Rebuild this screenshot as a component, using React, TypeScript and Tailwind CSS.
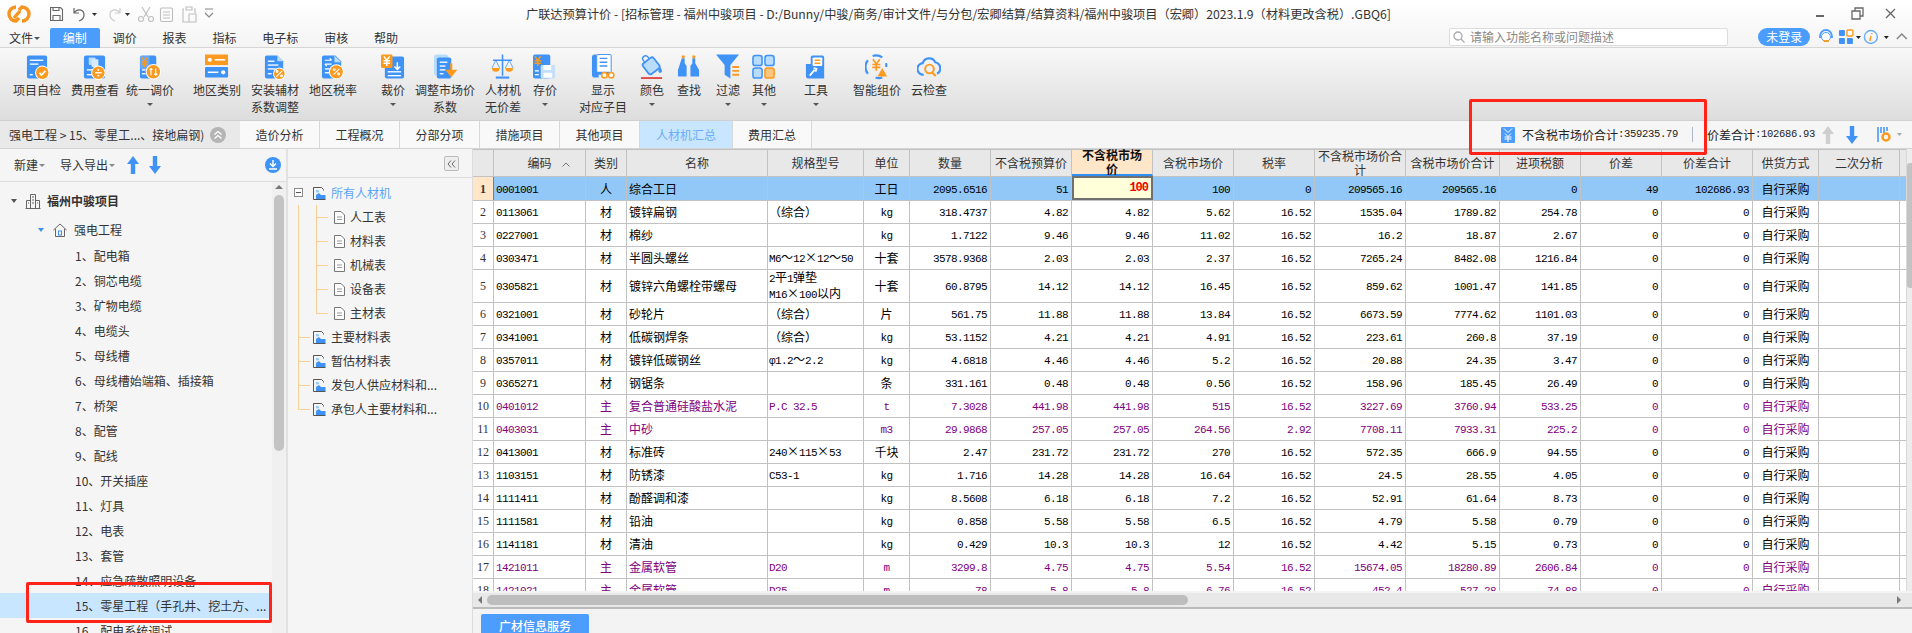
import React from "react";

const B = "#3f93f6";
const O = "#fb9a1e";
const L = "#b9dcfb";

function Yen({ x, y, s = 1, c = "#fff" }: { x: number; y: number; s?: number; c?: string }) {
  return (
    <g transform={`translate(${x} ${y}) scale(${s})`} stroke={c} strokeWidth="1.5" fill="none">
      <path d="M1 0l3 4 3-4M.5 4.5h7M.5 7h7M4 4v6" />
    </g>
  );
}
function Badge({ x, y, r, children }: { x: number; y: number; r: number; children?: React.ReactNode }) {
  return (
    <g>
      <circle cx={x} cy={y} r={r + 1} fill="#fff" />
      <circle cx={x} cy={y} r={r} fill={O} />
      {children}
    </g>
  );
}
function Lines({ x, ys, w }: { x: number; ys: number[]; w: number[] }) {
  return (
    <g stroke="#fff" strokeWidth="1.4">
      {ys.map((y, i) => (
        <path key={i} d={`M${x} ${y}h${w[i]}`} />
      ))}
    </g>
  );
}
const Pct = ({ x, y }: { x: number; y: number }) => (
  <g stroke="#fff" strokeWidth="1.2" fill="none">
    <path d={`M${x + 3} ${y - 3}l-6 6`} />
    <circle cx={x - 2.3} cy={y - 2.3} r=".9" />
    <circle cx={x + 2.3} cy={y + 2.3} r=".9" />
  </g>
);

const icons: Record<string, React.ReactNode> = {
  a: (
    <>
      <rect x="2" y="1" width="21" height="24" rx="2" fill={B} />
      <Lines x={5} ys={[6, 10, 21]} w={[14, 9, 3]} />
      <Badge x={18} y={19} r={6.5}>
        <path d="M15 19l2.2 2.4 4-4.4" stroke="#fff" strokeWidth="1.7" fill="none" />
      </Badge>
    </>
  ),
  b: (
    <>
      <rect x="1" y="1" width="22" height="24" rx="2" fill={B} />
      <rect x="6" y="3" width="7" height="8" rx="1" fill={L} />
      <rect x="9" y="5" width="7" height="8" rx="1" fill="#d7ebfd" />
      <Lines x={4} ys={[16, 21]} w={[6, 6]} />
      <Badge x={16} y={19} r={6.5}>
        <path d="M12.5 19h7" stroke="#fff" strokeWidth="1.4" />
        <circle cx="16" cy="16" r="1" fill="#fff" />
        <circle cx="16" cy="22" r="1" fill="#fff" />
      </Badge>
    </>
  ),
  c: (
    <>
      <rect x="2" y="1" width="17" height="24" rx="2" fill={B} />
      <rect x="2" y="1" width="10" height="14" rx="1" fill="#fff" opacity=".2" />
      <Yen x={3} y={3} c={O} />
      <Lines x={4} ys={[16, 20]} w={[4, 4]} />
      <Badge x={16} y={18} r={7}>
        <path d="M13.5 14.5v7M12 16l1.5-1.5L15 16M18.5 21.5v-7M17 20l1.5 1.500L20 20" stroke="#fff" strokeWidth="1.2" fill="none" />
      </Badge>
    </>
  ),
  d: (
    <>
      <rect x="0" y="0" width="24" height="11" fill={O} />
      <rect x="0" y="13" width="24" height="11" rx="1" fill={B} />
      <circle cx="5" cy="5.5" r="2.2" fill="#fff" />
      <path d="M10 5.5h11" stroke="#fff" strokeWidth="1.6" />
      <path d="M3 18.5h11" stroke="#fff" strokeWidth="1.6" />
      <circle cx="19" cy="18.5" r="2.2" fill="#fff" />
    </>
  ),
  e: (
    <>
      <path d="M2 3a2 2 0 012-2h11l6 6v16a2 2 0 01-2 2H4a2 2 0 01-2-2z" fill={B} />
      <path d="M15 1l6 6h-6z" fill={L} />
      <Lines x={5} ys={[7, 11, 15, 20]} w={[7, 11, 8, 4]} />
      <Badge x={17} y={20} r={5.5}><Pct x={17} y={20} /></Badge>
    </>
  ),
  f: (
    <>
      <path d="M1 3a2 2 0 012-2h12l6 6v16a2 2 0 01-2 2H3a2 2 0 01-2-2z" fill={B} />
      <path d="M14 1l7 7h-7z" fill={L} />
      <path d="M4 6h7M9 4l2 2M11 10H4M6 12l-2-2" stroke="#fff" strokeWidth="1.2" fill="none" />
      <Lines x={4} ys={[15, 19]} w={[5, 5]} />
      <Badge x={16} y={18} r={6.8}><Pct x={16} y={18} /></Badge>
    </>
  ),
  g: (
    <>
      <rect x="4" y="2" width="20" height="23" rx="2" fill={B} />
      <rect x="0" y="0" width="12" height="14" rx="1.5" fill={O} />
      <Yen x={2} y={2} />
      <path d="M17 8v7M14 12.5l3 3 3-3" stroke="#fff" strokeWidth="1.6" fill="none" />
      <Lines x={7} ys={[18, 22]} w={[14, 14]} />
    </>
  ),
  h: (
    <>
      <rect x="1" y="0" width="15" height="22" rx="3" fill={L} />
      <rect x="4" y="3" width="15" height="22" rx="2" fill={B} />
      <Lines x={7} ys={[8, 12, 16, 20]} w={[8, 6, 6, 4]} />
      <path d="M19 9v12M15 17l4 5 4-5z" stroke={O} strokeWidth="2.2" fill={O} />
    </>
  ),
  i: (
    <>
      <path d="M12 0v22M2 6h20" stroke={B} strokeWidth="1.6" />
      <path d="M5 24h14" stroke={B} strokeWidth="2.2" />
      <path d="M1 14h8a4 4 0 01-8 0zM15 14h8a4 4 0 01-8 0z" fill={O} />
      <path d="M5 6l-4 8M5 6l4 8M19 6l-4 8M19 6l4 8" stroke={B} strokeWidth=".8" />
    </>
  ),
  j: (
    <>
      <rect x="0" y="0" width="18" height="25" rx="2" fill={B} />
      <Yen x={1} y={2} c={O} />
      <rect x="8" y="11" width="15" height="14" rx="1.5" fill="#c3dffa" />
      <rect x="11" y="11" width="8" height="5" fill="#fff" />
      <rect x="11" y="19" width="9" height="5" fill="#fff" />
      <Lines x={2} ys={[17, 21]} w={[4, 4]} />
    </>
  ),
  k: (
    <>
      <path d="M1 3a3 3 0 013-3h2v20H1z" fill={B} />
      <rect x="6" y="0" width="15" height="19" rx="1" fill="#fff" stroke={B} strokeWidth="1" />
      <path d="M1 21a3 3 0 013-3h16v3H8v3H4a3 3 0 01-3-3z" fill={B} />
      <g stroke={B}><path d="M9 4h8M9 8h8M9 12h8" strokeWidth="1.5" /></g>
      <circle cx="14" cy="21.5" r="2.8" fill="#fff" stroke={O} strokeWidth="1.6" />
      <circle cx="21" cy="21.5" r="2.8" fill="#fff" stroke={O} strokeWidth="1.6" />
    </>
  ),
  l: (
    <>
      <g transform="rotate(-38 11 11)">
        <rect x="4" y="5" width="14" height="14" rx="2.5" fill={L} stroke={B} strokeWidth="1.8" />
        <path d="M8 5V2.500a3 3 0 016 0V5" stroke={B} strokeWidth="1.4" />
      </g>
      <path d="M21 13c2.500 3.500 2.500 6 0 6s-2.500-2.500 0-6z" fill={B} />
      <path d="M1 24.500h22" stroke="#e04b4b" strokeWidth="2" />
    </>
  ),
  m: (
    <>
      <path d="M5 4h3v5l2 3v11H1v-7zM16 4h3v5l4 7v7h-9V12l2-3z" fill={B} />
      <path d="M5 1h3v3H5zM16 1h3v3h-3z" fill={O} />
    </>
  ),
  n: (
    <>
      <path d="M0 0h24l-9 11v14l-6-4V11z" fill={B} />
      <path d="M17 12h7v2h-7zM17 16h7v2h-7zM17 20h7v2h-7z" fill={O} />
    </>
  ),
  o: (
    <>
      <rect x="1" y="1" width="9.5" height="10.5" rx="2.5" fill={L} stroke={B} strokeWidth="1.6" />
      <rect x="13.5" y="1" width="9.5" height="10.5" rx="2.5" fill={L} stroke={B} strokeWidth="1.6" />
      <rect x="1" y="14" width="9.5" height="10.5" rx="2.5" fill={L} stroke={B} strokeWidth="1.6" />
      <rect x="13.5" y="14" width="9.5" height="10.5" rx="2.5" fill="#fcc67f" stroke={O} strokeWidth="1.6" />
    </>
  ),
  p: (
    <>
      <path d="M7 10V3a2 2 0 012-2h10a2 2 0 012 2v22H5a3 3 0 01-3-3V10z" fill={B} />
      <rect x="9" y="3" width="10" height="9" rx="1" fill="#fff" />
      <path d="M11 6h6M11 9h6" stroke={O} strokeWidth="1.6" />
      <path d="M6 22l5-6M10 14l3 1-1 3" stroke="#fff" strokeWidth="1.8" fill="none" />
    </>
  ),
  q: (
    <>
      <path d="M3 20A11 11 0 013 6M8 1.500A11 11 0 0118 3M22 9a11 11 0 010 4M18 24a11 11 0 01-7 0" stroke={B} strokeWidth="2.2" fill="none" />
      <Yen x={7} y={5} s={1.2} c={O} />
      <path d="M18 14l5 9H13z" fill={O} />
    </>
  ),
  r: (
    <>
      <path d="M7 21a6 6 0 01-1-12 7 7 0 0113-1 6.500 6.500 0 012 12" stroke={B} strokeWidth="2.2" fill="none" />
      <circle cx="13" cy="15" r="4.500" stroke={O} strokeWidth="2" fill="none" />
      <path d="M16 19l3.500 3.500" stroke={O} strokeWidth="2.2" />
    </>
  ),
};

type T = { k: string; l: string; ml: string; w: string; arrow?: boolean };
const tools: T[] = [
  { k: "a", l: "项目自检", ml: "ml-[13px]", w: "w-[48px]" },
  { k: "b", l: "费用查看", ml: "ml-[10px]", w: "w-[48px]" },
  { k: "c", l: "统一调价", ml: "ml-[7px]", w: "w-[48px]", arrow: true },
  { k: "d", l: "地区类别", ml: "ml-[19px]", w: "w-[48px]" },
  { k: "e", l: "安装辅材\n系数调整", ml: "ml-[10px]", w: "w-[48px]" },
  { k: "f", l: "地区税率", ml: "ml-[10px]", w: "w-[48px]" },
  { k: "g", l: "裁价", ml: "ml-[24px]", w: "w-[24px]", arrow: true },
  { k: "h", l: "调整市场价\n系数", ml: "ml-[10px]", w: "w-[60px]" },
  { k: "i", l: "人材机\n无价差", ml: "ml-[10px]", w: "w-[36px]" },
  { k: "j", l: "存价", ml: "ml-[12px]", w: "w-[24px]", arrow: true },
  { k: "k", l: "显示\n对应子目", ml: "ml-[22px]", w: "w-[48px]" },
  { k: "l", l: "颜色", ml: "ml-[13px]", w: "w-[24px]", arrow: true },
  { k: "m", l: "查找", ml: "ml-[13px]", w: "w-[24px]" },
  { k: "n", l: "过滤", ml: "ml-[15px]", w: "w-[24px]", arrow: true },
  { k: "o", l: "其他", ml: "ml-[12px]", w: "w-[24px]", arrow: true },
  { k: "p", l: "工具", ml: "ml-[28px]", w: "w-[24px]", arrow: true },
  { k: "q", l: "智能组价", ml: "ml-[25px]", w: "w-[48px]" },
  { k: "r", l: "云检查", ml: "ml-[10px]", w: "w-[36px]" },
];

const Caret = ({ c = "border-t-[#555]", cls = "" }: { c?: string; cls?: string }) => (
  <span className={`inline-block w-0 h-0 border-x-[3px] border-x-transparent border-t-[3px] ${c} ${cls}`} />
);

const Arrow = ({ up, color, cls = "" }: { up?: boolean; color: string; cls?: string }) => (
  <svg width="12" height="18" viewBox="0 0 12 18" className={cls}>
    <path d={up ? "M6 0l6 8H8.200v10H3.800V8H0z" : "M6 18l6-8H8.200V0H3.800v10H0z"} fill={color} />
  </svg>
);

const cols = [
  "w-[21px]", "w-[92px]", "w-[41px]", "w-[141px]", "w-[96px]", "w-[46px]", "w-[81px]", "w-[81px]", "w-[81px]",
  "w-[81px]", "w-[81px]", "w-[91px]", "w-[94px]", "w-[81px]", "w-[81px]", "w-[91px]", "w-[66px]", "w-[81px]",
];
const heads = [
  "", "编码", "类别", "名称", "规格型号", "单位", "数量", "不含税预算价", "不含税市场\n价", "含税市场价", "税率",
  "不含税市场价合\n计", "含税市场价合计", "进项税额", "价差", "价差合计", "供货方式", "二次分析",
];
const S = "自行采购";
const rows: string[][] = [
  ["0001001","人","综合工日","","工日","2095.6516","51","100","100","0","209565.16","209565.16","0","49","102686.93",S,""],
  ["0113061","材","镀锌扁钢","（综合）","kg","318.4737","4.82","4.82","5.62","16.52","1535.04","1789.82","254.78","0","0",S,""],
  ["0227001","材","棉纱","","kg","1.7122","9.46","9.46","11.02","16.52","16.2","18.87","2.67","0","0",S,""],
  ["0303471","材","半圆头螺丝","M6～12×12～50","十套","3578.9368","2.03","2.03","2.37","16.52","7265.24","8482.08","1216.84","0","0",S,""],
  ["0305821","材","镀锌六角螺栓带螺母","2平1弹垫\nM16×100以内","十套","60.8795","14.12","14.12","16.45","16.52","859.62","1001.47","141.85","0","0",S,""],
  ["0321001","材","砂轮片","（综合）","片","561.75","11.88","11.88","13.84","16.52","6673.59","7774.62","1101.03","0","0",S,""],
  ["0341001","材","低碳钢焊条","（综合）","kg","53.1152","4.21","4.21","4.91","16.52","223.61","260.8","37.19","0","0",S,""],
  ["0357011","材","镀锌低碳钢丝","φ1.2～2.2","kg","4.6818","4.46","4.46","5.2","16.52","20.88","24.35","3.47","0","0",S,""],
  ["0365271","材","钢锯条","","条","331.161","0.48","0.48","0.56","16.52","158.96","185.45","26.49","0","0",S,""],
  ["0401012","主","复合普通硅酸盐水泥","P.C 32.5","t","7.3028","441.98","441.98","515","16.52","3227.69","3760.94","533.25","0","0",S,""],
  ["0403031","主","中砂","","m3","29.9868","257.05","257.05","264.56","2.92","7708.11","7933.31","225.2","0","0",S,""],
  ["0413001","材","标准砖","240×115×53","千块","2.47","231.72","231.72","270","16.52","572.35","666.9","94.55","0","0",S,""],
  ["1103151","材","防锈漆","C53-1","kg","1.716","14.28","14.28","16.64","16.52","24.5","28.55","4.05","0","0",S,""],
  ["1111411","材","酚醛调和漆","","kg","8.5608","6.18","6.18","7.2","16.52","52.91","61.64","8.73","0","0",S,""],
  ["1111581","材","铅油","","kg","0.858","5.58","5.58","6.5","16.52","4.79","5.58","0.79","0","0",S,""],
  ["1141181","材","清油","","kg","0.429","10.3","10.3","12","16.52","4.42","5.15","0.73","0","0",S,""],
  ["1421011","主","金属软管","D20","m","3299.8","4.75","4.75","5.54","16.52","15674.05","18280.89","2606.84","0","0",S,""],
  ["1421021","主","金属软管","D25","m","78","5.8","5.8","6.76","16.52","452.4","527.28","74.88","0","0",S,""],
];

function Mixed({ t }: { t: string }) {
  const parts = t.split(/([\u3000-\u9fff\uff00-\uffef×]+)/).filter(Boolean);
  return (
    <>
      {parts.map((p, i) =>
        /[\u3000-\u9fff\uff00-\uffef×]/.test(p) ? (
          <span key={i} className="text-[12px] tracking-normal font-['Noto_Sans_CJK_SC',sans-serif]">{p}</span>
        ) : (
          <span key={i} className="text-[11px] tracking-[-0.6px] font-['Liberation_Mono',monospace]">{p}</span>
        )
      )}
    </>
  );
}

function alignFor(ci: number) {
  if (ci === 1 || ci === 4 || ci === 15) return "justify-center";
  if (ci === 0 || ci === 2) return "justify-start pl-[2px]";
  if (ci === 3) return "justify-start pl-[1px]";
  if (ci === 16) return "";
  return "justify-end pr-[3px]";
}

const TableRow = ({ r, i }: { r: string[]; i: number }) => {
  const sel = i === 0;
  const h = sel ? "h-[24px]" : i === 4 ? "h-[33px]" : "h-[23px]";
  const purple = r[1] === "主";
  return (
    <div className={`flex ${h} shrink-0 w-[1433px] border-b border-[#c2c2c2] ${sel ? "bg-[#92c8f8]" : "bg-white"} ${purple ? "text-[#800080]" : "text-black"}`}>
      <div className={`${cols[0]} shrink-0 flex items-center justify-center border-r ${sel ? "bg-[#ffe6c9] border-[#2f8ff0] font-bold" : "border-[#c2c2c2]"}`}>
        <span className="text-[12px] font-['Liberation_Serif',serif] text-[#333]">{i + 1}</span>
      </div>
      {r.map((v, ci) => {
        const active = sel && ci === 7;
        return (
          <div
            key={ci}
            className={`${cols[ci + 1]} shrink-0 flex items-center overflow-hidden whitespace-nowrap ${active ? "bg-[#ffffd9] border-2 border-[#707070] -mt-px" : "border-r border-[#c2c2c2]"} ${alignFor(ci)}`}
          >
            {active ? (
              <span className="text-[12px] font-bold text-[#f00000] font-['Liberation_Mono',monospace] tracking-[-1px]">{v}</span>
            ) : ci === 3 && v.includes("\n") ? (
              <div className="flex flex-col leading-[14px]">
                {v.split("\n").map((x) => (
                  <span key={x}><Mixed t={x} /></span>
                ))}
              </div>
            ) : (
              <span><Mixed t={v} /></span>
            )}
          </div>
        );
      })}
    </div>
  );
};

const Folder = () => (
  <svg width="13" height="13" viewBox="0 0 13 13" className="shrink-0">
    <path d="M.5.5h8l2 2v1M.5.5v12h12" fill="none" stroke="#555" />
    <path d="M3 3h3v2.500H3z" fill="#9cc9f5" />
    <path d="M3 12V8l3-2 2 2h4.500v4z" fill="#3f93f6" />
  </svg>
);
const Doc = () => (
  <svg width="11" height="13" viewBox="0 0 11 13" className="shrink-0">
    <path d="M.5.5h6.500l3.500 3.500v8.500H.5z" fill="#fff" stroke="#777" />
    <path d="M3 6h5M3 8.500h5" stroke="#999" />
  </svg>
);

const leftItems = [
  "1、配电箱", "2、铜芯电缆", "3、矿物电缆", "4、电缆头", "5、母线槽", "6、母线槽始端箱、插接箱", "7、桥架", "8、配管", "9、配线",
  "10、开关插座", "11、灯具", "12、电表", "13、套管", "14、应急疏散照明设备", "15、零星工程（手孔井、挖土方、...", "16、配电系统调试",
];

const midRows: { t: string; f?: boolean; on?: boolean }[] = [
  { t: "所有人材机", f: true, on: true },
  { t: "人工表" }, { t: "材料表" }, { t: "机械表" }, { t: "设备表" }, { t: "主材表" },
  { t: "主要材料表", f: true }, { t: "暂估材料表", f: true }, { t: "发包人供应材料和...", f: true }, { t: "承包人主要材料和...", f: true },
];

export default function App() {
  return (
    <div className="relative w-[1912px] h-[633px] overflow-hidden flex flex-col bg-[#f5f5f5] text-[12px] text-[#333] font-['Noto_Sans_CJK_SC','Liberation_Sans',sans-serif]">
      {/* title + menu */}
      <div className="h-[48px] shrink-0 bg-gradient-to-b from-white to-[#f4f4f4] relative border-b border-[#d6d6d6]">
        <div className="h-[28px] flex items-center">
          <svg width="24" height="20" viewBox="0 0 24 20" className="ml-[7px]">
            <path d="M9 3a7 7 0 100 14l3-3M15 17a7 7 0 100-14l-3 3" fill="none" stroke="#f7941d" strokeWidth="3.400" />
            <path d="M7 14l6-7" stroke="#f7941d" strokeWidth="3.400" />
          </svg>
          <svg width="170" height="18" viewBox="0 0 170 18" className="ml-[19px]" fill="none">
            <g stroke="#666" strokeWidth="1.100">
              <path d="M.5 2.500h10l2 2v11H.5z" />
              <path d="M3 15.500v-5h7v5M3 2.500v3h6v-3" />
            </g>
            <path d="M24 3v5h5M24 8c3-5 10-4 10 2 0 3-2 5-5 6" stroke="#666" strokeWidth="1.200" />
            <path d="M42 8l5 0-2.500 3z" fill="#333" />
            <path d="M70 3v5h-5M70 8c-3-5-10-4-10 2 0 3 2 5 5 6" stroke="#ccc" strokeWidth="1.200" />
            <path d="M75 8l5 0-2.500 3z" fill="#333" />
            <g stroke="#bdbdbd" strokeWidth="1.100">
              <path d="M92 2l6 10M100 2l-6 10" />
              <circle cx="91" cy="14" r="2.500" />
              <circle cx="101" cy="14" r="2.500" />
              <path d="M112 3h9a1.500 1.500 0 011.500 1.500V15a1.500 1.500 0 01-1.500 1.500h-9A1.500 1.500 0 01110.500 15V4.500A1.500 1.500 0 01112 3zM113 7h7M113 10h7M113 13h7" />
              <path d="M134 4h-1v13h9M144 4h1v4M136 2h6v3h-6zM139 9h7v8h-7z" />
            </g>
            <path d="M155 4h8M155 8l4 4 4-4" stroke="#888" strokeWidth="1.200" />
          </svg>
          <div className="absolute left-[526px] top-[5px] w-[870px] whitespace-nowrap text-[12.2px] leading-[18px]">
            广联达预算计价 - [招标管理 - 福州中骏项目 - D:/Bunny/中骏/商务/审计文件/与分包/宏卿结算/结算资料/福州中骏项目（宏卿）2023.1.9（材料更改含税）.GBQ6]
          </div>
          <svg width="90" height="16" viewBox="0 0 90 16" className="ml-auto mr-[6px]" fill="none" stroke="#666" strokeWidth="1.300">
            <path d="M0 10h8" strokeWidth="2" />
            <path d="M36 5h8v8h-8zM39 5V2h8v8h-3" />
            <path d="M70 3l9 9M79 3l-9 9" />
          </svg>
        </div>
        <div className="h-[20px] flex items-stretch">
          <div className="w-[50px] flex items-center pl-[9px]">文件<Caret cls="ml-px" /></div>
          <div className="w-[50px] flex items-center justify-center bg-[#4a9dfd] text-white rounded-t-[2px]">编制</div>
          <div className="w-[50px] flex items-center justify-center">调价</div>
          <div className="w-[50px] flex items-center justify-center">报表</div>
          <div className="w-[50px] flex items-center justify-center">指标</div>
          <div className="w-[62px] flex items-center justify-center">电子标</div>
          <div className="w-[50px] flex items-center justify-center">审核</div>
          <div className="w-[50px] flex items-center justify-center">帮助</div>
          <div className="ml-[1038px] w-[280px] h-[18px] bg-white border border-[#ddd] rounded-[2px] flex items-center pl-[3px] text-[#888]">
            <svg width="12" height="12" viewBox="0 0 12 12" fill="none" stroke="#aaa" strokeWidth="1.300" className="mr-[5px]">
              <circle cx="5" cy="5" r="4" /><path d="M8 8l3.500 3.500" />
            </svg>
            请输入功能名称或问题描述
          </div>
          <div className="ml-[30px] w-[52px] h-[18px] bg-[#4a9dfd] text-white rounded-full flex items-center justify-center">未登录</div>
          <svg width="94" height="18" viewBox="0 0 94 18" className="ml-[8px]" fill="none">
            <path d="M2 10V8a6 6 0 0112 0v2" stroke="#4a9dfd" strokeWidth="1.800" />
            <circle cx="8" cy="9" r="4.500" fill="#fff" stroke="#4a9dfd" />
            <path d="M6 13h5" stroke={O} strokeWidth="1.800" />
            <rect x="21" y="2" width="6" height="6" rx="1" fill="#3f93f6" />
            <rect x="29" y="2" width="6" height="6" rx="1" fill="#fff" stroke={O} strokeWidth="1.400" />
            <rect x="21" y="10" width="6" height="6" rx="1" fill="#3f93f6" />
            <rect x="29" y="10" width="6" height="6" rx="1" fill="#3f93f6" />
            <path d="M38 8h5l-2.500 3z" fill="#222" />
            <circle cx="53" cy="9" r="6.500" stroke="#67aef8" strokeWidth="1.400" />
            <path d="M54 5v1M53 8l-1 5" stroke={O} strokeWidth="1.500" />
            <path d="M66 8h5l-2.500 3z" fill="#222" />
            <path d="M79 11l5-5 5 5" stroke="#888" strokeWidth="1.600" />
          </svg>
        </div>
      </div>

      {/* ribbon */}
      <div className="h-[73px] shrink-0 flex bg-gradient-to-b from-[#f8f8f8] to-[#dddddd] border-b border-[#d0d0d0]">
        {tools.map((t) => (
          <div key={t.k} className={`${t.ml} ${t.w} shrink-0 flex flex-col items-center pt-[6px] relative`}>
            <svg width="24" height="26" viewBox="0 0 25 26" className="shrink-0" fill="none">{icons[t.k]}</svg>
            <div className="mt-px whitespace-pre text-center leading-[17px] text-[#333]">{t.l}</div>
            {t.arrow && <Caret cls="mt-[5px]" />}
          </div>
        ))}
      </div>

      {/* page tabs */}
      <div className="h-[28px] shrink-0 flex items-stretch bg-[#f6f6f6] border-b border-[#d4d4d4]">
        <div className="w-[240px] shrink-0 bg-[#e9e9e9] flex items-center pl-[9px] text-[12px] whitespace-nowrap">
          强电工程 &gt; 15、零星工...、接地扁钢)
          <span className="ml-[6px] w-[16px] h-[16px] rounded-full bg-[#b5b5b5] flex items-center justify-center">
            <svg width="10" height="10" viewBox="0 0 10 10" fill="none" stroke="#fff" strokeWidth="1.300"><path d="M1.500 4.500L5 1.500l3.500 3M1.500 8.500L5 5.500l3.500 3" /></svg>
          </span>
        </div>
        {["造价分析", "工程概况", "分部分项", "措施项目", "其他项目"].map((x) => (
          <div key={x} className="w-[80px] shrink-0 flex items-center justify-center border-r border-[#d8d8d8] bg-[#f9f9f9]">{x}</div>
        ))}
        <div className="w-[92px] shrink-0 flex items-center justify-center bg-[#c8e6ff] text-[#6aaef5]">人材机汇总</div>
        <div className="w-[80px] shrink-0 flex items-center justify-center border-x border-[#d8d8d8] bg-[#f9f9f9]">费用汇总</div>
        <svg width="14" height="16" viewBox="0 0 14 16" className="ml-[689px] self-center shrink-0">
          <rect width="14" height="16" rx="1" fill="#4a9dfd" />
          <path d="M3 1.500l4 4 4-4" stroke="#fff" fill="none" />
          <path d="M4 6.500l3 3 3-3M3.500 10h7M3.500 12h7M7 9.500V15" stroke="#fff" fill="none" />
        </svg>
        <div className="ml-[7px] flex items-center whitespace-nowrap text-[#222]">
          不含税市场价合计<span className="text-[10.5px] font-['Liberation_Mono',monospace] tracking-[-0.3px]">:359235.79</span>
        </div>
        <div className="ml-[14px] my-[6px] w-px bg-[#aab8cc]" />
        <div className="ml-[14px] flex items-center whitespace-nowrap text-[#222]">
          价差合计<span className="text-[10.5px] font-['Liberation_Mono',monospace] tracking-[-0.3px]">:102686.93</span>
        </div>
        <Arrow up color="#cfcfcf" cls="ml-[7px] self-center shrink-0" />
        <Arrow color="#3f93f6" cls="ml-[12px] self-center shrink-0" />
        <svg width="26" height="17" viewBox="0 0 26 17" className="ml-[19px] self-center shrink-0" fill="none">
          <path d="M1 1v15M4 1v6M7 1v6M10 1v4" stroke="#3f93f6" strokeWidth="1.500" />
          <circle cx="9" cy="11" r="3.500" stroke={O} strokeWidth="2.500" />
          <path d="M20 7h5l-2.500 3z" fill="#aaa" />
        </svg>
      </div>

      {/* main */}
      <div className="flex-1 min-h-0 flex">
        {/* left */}
        <div className="w-[288px] shrink-0 flex flex-col border-r-2 border-[#e2e2e2]">
          <div className="h-[33px] shrink-0 flex items-center border-b border-[#dcdcdc]">
            <span className="ml-[14px]">新建</span><Caret c="border-t-[#888]" cls="ml-px" />
            <span className="ml-[15px]">导入导出</span><Caret c="border-t-[#888]" cls="ml-px" />
            <Arrow up color="#3f93f6" cls="ml-[12px]" />
            <Arrow color="#3f93f6" cls="ml-[10px]" />
            <svg width="16" height="16" viewBox="0 0 16 16" className="ml-[104px]" fill="none">
              <circle cx="8" cy="8" r="8" fill="#3f93f6" />
              <path d="M8 3v6M5 6.500L8 9.500l3-3M4 12h8" stroke="#fff" strokeWidth="1.400" />
            </svg>
          </div>
          <div className="flex-1 min-h-0 flex">
            <div className="flex-1 min-w-0 overflow-hidden pt-[4px]">
              <div className="h-[30px] flex items-center">
                <span className="ml-[11px] w-0 h-0 border-x-[3.500px] border-x-transparent border-t-[4px] border-t-[#555]" />
                <svg width="16" height="16" viewBox="0 0 16 16" className="ml-[8px]" fill="none" stroke="#666">
                  <path d="M.5 15.500h15M5.500 15.500V1.500h5v14M1.500 15.500V7.500h4M10.500 7.500h4v8" />
                  <path d="M7 4h2M7 7h2M7 10h2M3 10h1M12 10h1" />
                </svg>
                <span className="ml-[6px] font-bold">福州中骏项目</span>
              </div>
              <div className="h-[27px] flex items-center">
                <span className="ml-[38px] w-0 h-0 border-x-[3.500px] border-x-transparent border-t-[4px] border-t-[#3f93f6]" />
                <svg width="14" height="14" viewBox="0 0 14 14" className="ml-[9px]" fill="none" stroke="#666">
                  <path d="M.5 7L7 1l6.500 6M2.500 6v7.500h9V6" />
                  <rect x="5.500" y="8" width="3" height="4" stroke="#3f93f6" />
                </svg>
                <span className="ml-[7px]">强电工程</span>
              </div>
              {leftItems.map((t, i) => (
                <div key={t} className={`h-[25px] flex items-center pl-[75px] whitespace-nowrap ${i === 14 ? "bg-[#c8e6ff]" : ""}`}>{t}</div>
              ))}
            </div>
            <div className="w-[14px] shrink-0 bg-[#f0f0f0] flex flex-col items-center">
              <span className="mt-[3px] w-0 h-0 border-x-[4px] border-x-transparent border-b-[4px] border-b-[#777]" />
              <div className="mt-[6px] w-[10px] h-[256px] rounded-[5px] bg-[#c3c3c3]" />
            </div>
          </div>
        </div>

        {/* middle */}
        <div className="w-[185px] shrink-0 flex flex-col border-r border-[#dcdcdc]">
          <div className="h-[29px] shrink-0 flex items-start justify-end border-b border-[#dcdcdc] pt-[7px] pr-[13px]">
            <div className="w-[15px] h-[15px] rounded-[2px] border border-[#bbb] bg-[#eee] flex items-center justify-center">
              <svg width="9" height="8" viewBox="0 0 9 8" fill="none" stroke="#666"><path d="M4 .5L1 4l3 3.500M8 .5L5 4l3 3.500" /></svg>
            </div>
          </div>
          <div className="flex-1 pt-[3px] relative">
            <div className="absolute left-[10px] top-[27px] w-px h-[204px] bg-[#f9cf96]" />
            <div className="absolute left-[28px] top-[27px] w-px h-[108px] bg-[#f9cf96]" />
            {midRows.map((r, i) => (
              <div key={r.t} className={`h-[24px] flex items-center relative whitespace-nowrap ${r.f ? "pl-[25px]" : "pl-[46px]"}`}>
                {i === 0 && (
                  <span className="absolute left-[6px] top-[7px] w-[9px] h-[9px] border border-[#8a8a8a] bg-white flex items-center justify-center">
                    <span className="w-[5px] h-px bg-[#555]" />
                  </span>
                )}
                {r.f && i > 0 ? <span className="absolute left-[10px] top-[12px] w-[12px] h-px bg-[#f9cf96]" /> : null}
                {!r.f ? <span className="absolute left-[28px] top-[12px] w-[12px] h-px bg-[#f9cf96]" /> : null}
                {r.f ? <Folder /> : <Doc />}
                <span className={`ml-[5px] ${r.on ? "text-[#5aa5f8]" : ""}`}>{r.t}</span>
              </div>
            ))}
          </div>
        </div>

        {/* table */}
        <div className="flex-1 min-w-0 flex flex-col bg-[#f3f3f3]">
          <div className="h-[442px] shrink-0 flex overflow-hidden bg-white">
            <div className="w-[1433px] shrink-0 flex flex-col overflow-hidden">
              <div className="h-[28px] shrink-0 flex bg-[#e8e8e8] border-y border-[#c2c2c2]">
                {heads.map((h, i) => (
                  <div
                    key={i}
                    className={`${cols[i]} relative shrink-0 flex items-center justify-center text-center whitespace-pre leading-[14px] border-r border-[#c2c2c2] ${i === 8 ? "bg-[#ffe6c9] font-bold text-[#111] border-b-2 border-b-[#2f8ff0]" : ""}`}
                  >
                    {h}
                    {i === 1 && (
                      <svg width="8" height="5" viewBox="0 0 8 5" fill="none" stroke="#777" className="absolute right-[15px] top-[12px]">
                        <path d="M.5 4.500L4 1l3.500 3.500" />
                      </svg>
                    )}
                  </div>
                ))}
                <div className="flex-1" />
              </div>
              {rows.map((r, i) => (
                <TableRow key={i} r={r} i={i} />
              ))}
            </div>
            <div className="flex-1 bg-[#ededed] flex flex-col items-end border-l border-[#d8d8d8]">
              <div className="mt-[14px] w-[5px] h-[125px] rounded-l-[3px] bg-[#c3c3c3]" />
            </div>
          </div>
          <div className="h-[2px] shrink-0" />
          <div className="h-[16px] shrink-0 bg-[#e8e8e8] border-b-2 border-[#bbbbbb] flex items-center pl-[5px]">
            <span className="w-0 h-0 border-y-[4px] border-y-transparent border-r-[4px] border-r-[#777]" />
            <div className="ml-[5px] w-[701px] h-[10px] rounded-[5px] bg-[#bdbdbd]" />
            <span className="ml-[709px] w-0 h-0 border-y-[4px] border-y-transparent border-l-[4px] border-l-[#777]" />
          </div>
          <div className="flex-1 min-h-0 overflow-hidden pl-[8px] pt-[5px] flex items-start">
            <div className="w-[108px] h-[24px] shrink-0 bg-[#4d9dff] text-white rounded-t-[2px] flex items-center justify-center font-medium">广材信息服务</div>
          </div>
        </div>
      </div>

      {/* annotation boxes */}
      <div className="absolute left-[1469px] top-[99px] w-[238px] h-[56px] border-[3px] border-[#ff2318] rounded-[2px]" />
      <div className="absolute left-[26px] top-[582px] w-[246px] h-[41px] border-[3px] border-[#ff2318] rounded-[2px]" />
    </div>
  );
}
